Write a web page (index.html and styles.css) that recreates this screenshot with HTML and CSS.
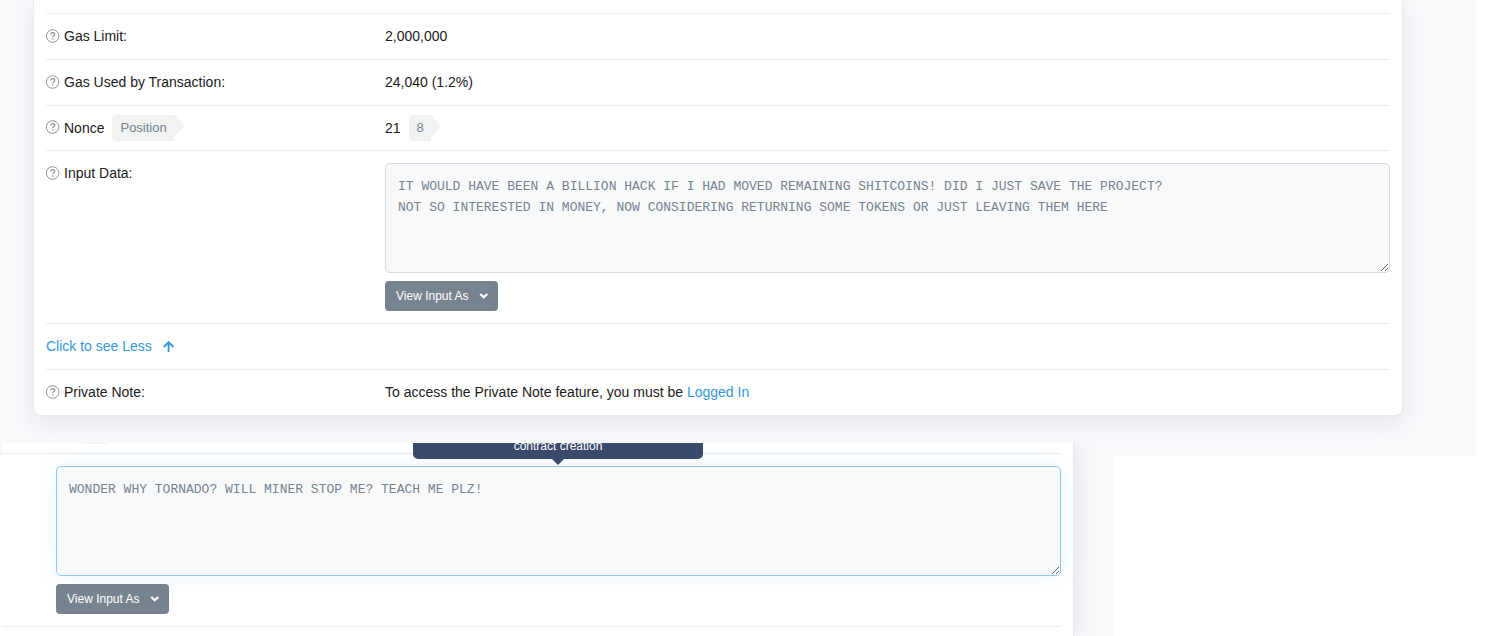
FILE: index.html
```html
<!DOCTYPE html>
<html lang="en">
<head>
<meta charset="utf-8">
<title>Transaction Details</title>
<link rel="stylesheet" href="styles.css">
</head>
<body>
<svg class="sprite" aria-hidden="true">
  <symbol id="help" viewBox="0 0 14 14">
    <circle cx="6.600" cy="7" r="6.300" fill="none" stroke="currentColor" stroke-width="1"/>
    <path d="M4.700 5.500C4.800 4.300 5.600 3.700 6.700 3.700c1.200 0 2 .7 2 1.700 0 1.400-2 1.400-2 2.900" fill="none" stroke="currentColor" stroke-width="1.200"/>
    <circle cx="6.700" cy="10" r=".8" fill="currentColor"/>
  </symbol>
  <symbol id="chevron" viewBox="0 0 10 10">
    <path d="M1.200 3 4.700 6.200l3.500-3.200" fill="none" stroke="currentColor" stroke-width="2.200"/>
  </symbol>
  <symbol id="arrow-up" viewBox="0 0 12 12">
    <path d="M5.600 11V1.400M.8 6 5.600 1.200 10.400 6" fill="none" stroke="currentColor" stroke-width="1.900"/>
  </symbol>
</svg>

<main class="page">
  <section class="card">
    <div class="row">
      <div class="label"><svg class="help"><use href="#help"/></svg>Gas Limit:</div>
      <div class="value">2,000,000</div>
    </div>
    <div class="row">
      <div class="label"><svg class="help"><use href="#help"/></svg>Gas Used by Transaction:</div>
      <div class="value">24,040 (1.2%)</div>
    </div>
    <div class="row row-tags">
      <div class="label"><svg class="help"><use href="#help"/></svg>Nonce <span class="tag">Position</span></div>
      <div class="value">21 <span class="tag">8</span></div>
    </div>
    <div class="row">
      <label class="label" for="input-data"><svg class="help"><use href="#help"/></svg>Input Data:</label>
      <div class="value input-block">
        <textarea id="input-data" class="data" readonly spellcheck="false">IT WOULD HAVE BEEN A BILLION HACK IF I HAD MOVED REMAINING SHITCOINS! DID I JUST SAVE THE PROJECT?
NOT SO INTERESTED IN MONEY, NOW CONSIDERING RETURNING SOME TOKENS OR JUST LEAVING THEM HERE</textarea>
        <button type="button" class="view-as">View Input As <svg class="chevron"><use href="#chevron"/></svg></button>
      </div>
    </div>
    <div class="row">
      <a class="link toggle" href="#less">Click to see Less <svg class="arrow"><use href="#arrow-up"/></svg></a>
    </div>
    <div class="row">
      <div class="label"><svg class="help"><use href="#help"/></svg>Private Note:</div>
      <div class="value note">To access the Private Note feature, you must be <a class="link" href="#login">Logged In</a></div>
    </div>
  </section>
</main>

<section class="excerpt">
  <div class="panel">
    <div class="edge"></div>
    <div class="excerpt-row">
      <div class="input-block">
        <textarea class="data active" aria-label="Input Data" readonly spellcheck="false">WONDER WHY TORNADO? WILL MINER STOP ME? TEACH ME PLZ!</textarea>
        <button type="button" class="view-as">View Input As <svg class="chevron"><use href="#chevron"/></svg></button>
      </div>
    </div>
    <div class="tooltip" role="tooltip">contract creation</div>
  </div>
</section>
</body>
</html>
```
FILE: styles.css
```css
* { box-sizing: border-box; }

body {
  margin: 0;
  background: #fff;
  color: #1e2022;
  font: 14px/21px "Liberation Sans", Arial, sans-serif;
  overflow: hidden;
}

.sprite { position: absolute; width: 0; height: 0; }

.page {
  margin-right: 18px;
  padding: 0 73px 40px 33px;
  background: #f8f9fb;
  overflow: hidden;
}

.card {
  padding: 13px 12px 0;
  background: #fff;
  border: 1px solid #e7eaf3;
  border-top: 0;
  border-radius: 0 0 8px 8px;
  box-shadow: 0 8px 24px rgba(140, 152, 164, 0.16);
}

.row {
  display: flex;
  padding: 12px 0;
  border-top: 1px solid #eaecf2;
  min-height: 46px;
}
.row-tags { padding: 9px 0; min-height: 45px; }

.label { display: flex; align-items: center; align-self: flex-start; width: 339px; flex: none; }
.value { display: flex; align-items: center; align-self: flex-start; flex: 1; min-width: 0; }
.note { display: block; }

.help { width: 14px; height: 14px; margin: 0 4px 2px 0; color: #8a949f; flex: none; overflow: visible; }

.tag {
  position: relative;
  margin-left: 8px;
  padding: 0 7px 0 8px;
  border-radius: 4px 0 0 4px;
  background: #f1f2f4;
  color: #77838f;
  font-size: 13px;
  line-height: 26px;
}
.tag::after {
  content: "";
  position: absolute;
  left: 100%;
  top: 0;
  border: solid transparent;
  border-width: 11px 0 11px 10px;
  border-left-color: #f1f2f4;
}

.input-block { display: flex; flex-direction: column; align-items: flex-start; gap: 8px; }

.data {
  display: block;
  width: 100%;
  height: 110px;
  padding: 12px;
  border: 1px solid #d5dae2;
  border-radius: 5px;
  background: #f8f9fb;
  color: #77838f;
  font: 13px/21px "Liberation Mono", Consolas, monospace;
  outline: 0;
  resize: vertical;
}
.active {
  border-color: #8fc8ef;
  box-shadow: 0 0 25px rgba(52, 152, 219, 0.1);
}

.view-as {
  display: flex;
  align-items: center;
  gap: 10px;
  height: 30px;
  padding: 0 9px 0 11px;
  border: 0;
  border-radius: 4px;
  background: #77838f;
  color: #fff;
  font: 12px/18px "Liberation Sans", Arial, sans-serif;
}
.chevron { width: 10px; height: 10px; }

.link { color: #3498db; text-decoration: none; }
.toggle { display: flex; align-items: center; gap: 11px; }
.arrow { width: 12px; height: 12px; }

.excerpt {
  position: relative;
  margin: -13px 381px 0 2px;
  padding-right: 39px;
  background: #f8f9fb;
  overflow: hidden;
}
.panel {
  position: relative;
  padding: 0 12px 9px 0;
  background: #fff;
  border-right: 1px solid #e7eaf3;
  box-shadow: 0 0 24px rgba(140, 152, 164, 0.22);
}
.edge { height: 10px; }
.edge::before {
  content: "";
  display: block;
  width: 26px;
  height: 1px;
  margin-left: 79px;
  background: #f1f2f4;
}
.excerpt-row {
  padding: 12px 0 12px 54px;
  border: solid #eaecf2;
  border-width: 1px 0;
}
.tooltip {
  position: absolute;
  top: -8px;
  left: 411px;
  width: 290px;
  height: 24px;
  border-radius: 5px;
  background: #3a4a6d;
  color: #fff;
  font-size: 12px;
  line-height: 22px;
  text-align: center;
}
.tooltip::after {
  content: "";
  position: absolute;
  top: 100%;
  left: 139px;
  border: 6px solid transparent;
  border-bottom: 0;
  border-top-color: #3a4a6d;
}
```
